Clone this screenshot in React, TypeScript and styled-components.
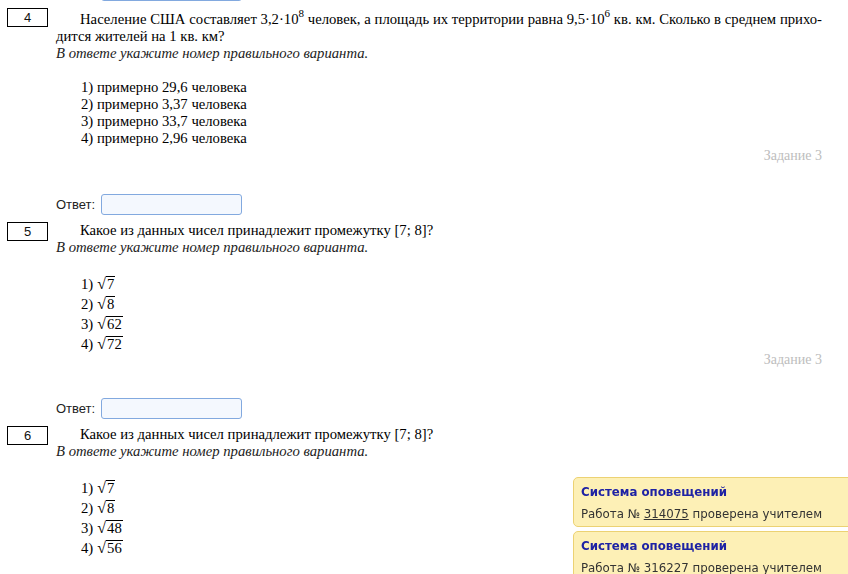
import React from "react";
import styled, { createGlobalStyle } from "styled-components";

const Global = createGlobalStyle`
  html, body { margin: 0; padding: 0; background: #fff; }
  body {
    font-family: "Liberation Serif", "Times New Roman", serif;
    color: #000;
    overflow: hidden;
    height: 574px;
  }
`;

const Page = styled.div`
  box-sizing: border-box;
  width: 822px;
  padding-left: 7px;
  margin-top: -50px;
`;

const Task = styled.section`
  display: grid;
  grid-template-columns: 49px 1fr;
  align-items: start;
  margin-bottom: 7px;
`;

const NumberBox = styled.div`
  box-sizing: border-box;
  width: 41px;
  height: 19px;
  border: 1px solid #000;
  font-family: "Liberation Sans", Arial, sans-serif;
  font-size: 13px;
  line-height: 17px;
  text-align: center;
  color: #111;
`;

const Body = styled.div`
  grid-column: 2;
`;

const Question = styled.p`
  margin: 0;
  font-size: 14.7px;
  line-height: 17px;
  text-indent: 24px;
  text-align: justify;
  sup {
    font-size: 11px;
    line-height: 1;
    vertical-align: 7px;
  }
`;

const Hint = styled.div`
  font-size: 14.7px;
  line-height: 17px;
  font-style: italic;
  color: #222;
`;

const Options = styled.ol<{ $tall?: boolean }>`
  list-style: none;
  margin: 17px 0 ${(p) => (p.$tall ? "-2px" : "0")};
  padding: 0 0 0 25px;
`;

const Option = styled.li<{ $tall?: boolean }>`
  box-sizing: border-box;
  font-size: 14.7px;
  line-height: 17px;
  height: ${(p) => (p.$tall ? "20px" : "17px")};
  padding-top: ${(p) => (p.$tall ? "3px" : "0")};
`;

const RadicalSign = styled.span`
  margin-left: 4px;
  font-size: 16px;
  line-height: 1;
`;

const Radicand = styled.span`
  display: inline-block;
  border-top: 1px solid #000;
  line-height: 14px;
  padding: 0 1px;
`;

const TaskLink = styled.div`
  text-align: right;
  font-size: 14px;
  line-height: 17px;
  color: #bdbdbd;
`;

const AnswerRow = styled.div`
  display: flex;
  align-items: center;
  gap: 6px;
  margin-top: 30px;
  height: 21px;
`;

const AnswerLabel = styled.label`
  font-family: "Liberation Sans", Arial, sans-serif;
  font-size: 13px;
  color: #222;
`;

const AnswerInput = styled.input`
  box-sizing: border-box;
  width: 141px;
  height: 21px;
  border: 1px solid #82a9df;
  border-radius: 3px;
  background: #f4f8fe;
  padding: 0 4px;
`;

const Notices = styled.aside`
  position: fixed;
  left: 573px;
  top: 477px;
  width: 300px;
  display: flex;
  flex-direction: column;
  gap: 4px;
`;

const Notice = styled.div`
  box-sizing: border-box;
  border: 1px solid #ecd273;
  border-radius: 5px;
  background: #fdf0b6;
  padding: 4px 7px 2px;
  font-family: "DejaVu Sans", Verdana, sans-serif;
  font-size: 11.8px;
`;

const NoticeTitle = styled.div`
  font-weight: bold;
  color: #1e22a4;
  line-height: 20px;
`;

const NoticeText = styled.div`
  color: #333;
  line-height: 20px;
  margin-top: 2px;
  a {
    color: #333;
    text-decoration: underline;
  }
`;

const Sqrt = ({ n }: { n: string }) => (
  <>
    <RadicalSign>√</RadicalSign>
    <Radicand>{n}</Radicand>
  </>
);

const Answer = () => (
  <AnswerRow>
    <AnswerLabel>Ответ:</AnswerLabel>
    <AnswerInput type="text" />
  </AnswerRow>
);

const sqrtTasks = [
  { num: "5", opts: ["7", "8", "62", "72"] },
  { num: "6", opts: ["7", "8", "48", "56"] },
];

export default function App() {
  return (
    <>
      <Global />
      <Page>
        <Task>
          <Body>
            <Answer />
          </Body>
        </Task>
        <Task>
          <NumberBox>4</NumberBox>
          <Body>
            <Question>
              Население США составляет 3,2·10<sup>8</sup> человек, а площадь их
              территории равна 9,5·10<sup>6</sup> кв. км. Сколько в среднем прихо&shy;дится
              жителей на 1 кв. км?
            </Question>
            <Hint>В ответе укажите номер правильного варианта.</Hint>
            <Options>
              <Option>1) примерно 29,6 человека</Option>
              <Option>2) примерно 3,37 человека</Option>
              <Option>3) примерно 33,7 человека</Option>
              <Option>4) примерно 2,96 человека</Option>
            </Options>
            <TaskLink>Задание 3</TaskLink>
            <Answer />
          </Body>
        </Task>
        {sqrtTasks.map((t) => (
          <Task key={t.num}>
            <NumberBox>{t.num}</NumberBox>
            <Body>
              <Question>Какое из данных чисел принадлежит промежутку [7; 8]?</Question>
              <Hint>В ответе укажите номер правильного варианта.</Hint>
              <Options $tall>
                {t.opts.map((o, i) => (
                  <Option key={o} $tall>
                    {i + 1})<Sqrt n={o} />
                  </Option>
                ))}
              </Options>
              <TaskLink>Задание 3</TaskLink>
              <Answer />
            </Body>
          </Task>
        ))}
      </Page>
      <Notices>
        <Notice>
          <NoticeTitle>Система оповещений</NoticeTitle>
          <NoticeText>
            Работа № <a href="#">314075</a> проверена учителем
          </NoticeText>
        </Notice>
        <Notice>
          <NoticeTitle>Система оповещений</NoticeTitle>
          <NoticeText>Работа № 316227 проверена учителем</NoticeText>
        </Notice>
      </Notices>
    </>
  );
}
